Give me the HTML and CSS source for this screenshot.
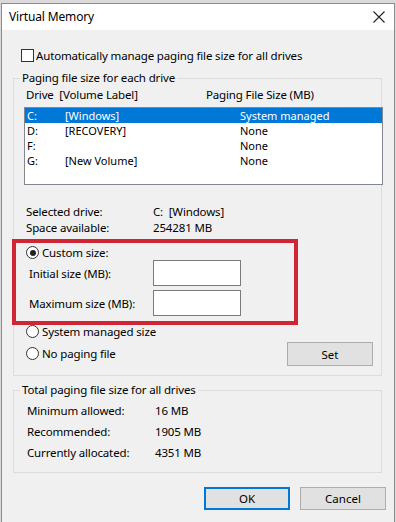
FILE: index.html
```html
<!DOCTYPE html>
<html lang="en">
<head>
    <meta charset="UTF-8">
    <meta name="viewport" content="width=device-width, initial-scale=1.0">
    <title>Virtual Memory</title>
    <link rel="stylesheet" href="styles.css">
</head>
<body>
    <div class="window">
        <div class="titlebar">
            <span class="title">Virtual Memory</span>
            <svg class="close" width="12" height="12" viewBox="0 0 12 12">
                <path d="M0.5 0.5 L11.5 11.5 M11.5 0.5 L0.5 11.5" stroke="#222" stroke-width="1.1" fill="none"/>
            </svg>
        </div>
        <div class="content">
            <div class="check-row">
                <span class="checkbox"></span>
                <span>Automatically manage paging file size for all drives</span>
            </div>

            <div class="group drives">
                <div class="legend">Paging file size for each drive</div>
                <div class="list-head">
                    <span class="head-drive">Drive&nbsp; [Volume Label]</span>
                    <span>Paging File Size (MB)</span>
                </div>
                <div class="listbox">
                    <div class="row selected"><span class="c1">C:</span><span class="c2">[Windows]</span><span>System managed</span></div>
                    <div class="row"><span class="c1">D:</span><span class="c2">[RECOVERY]</span><span>None</span></div>
                    <div class="row"><span class="c1">F:</span><span class="c2"></span><span>None</span></div>
                    <div class="row"><span class="c1">G:</span><span class="c2">[New Volume]</span><span>None</span></div>
                </div>

                <div class="info">
                    <div class="info-row"><span class="info-label">Selected drive:</span><span>C:&nbsp; [Windows]</span></div>
                    <div class="info-row"><span class="info-label">Space available:</span><span>254281 MB</span></div>
                </div>

                <div class="highlight">
                    <div class="radio-row"><span class="radio checked"></span><span>Custom size:</span></div>
                    <div class="size-row"><span class="size-label">Initial size (MB):</span><span class="textbox"></span></div>
                    <div class="size-row"><span class="size-label">Maximum size (MB):</span><span class="textbox"></span></div>
                </div>

                <div class="options">
                    <div class="option-list">
                        <div class="radio-row"><span class="radio"></span><span>System managed size</span></div>
                        <div class="radio-row"><span class="radio"></span><span>No paging file</span></div>
                    </div>
                    <button class="btn set-btn">Set</button>
                </div>
            </div>

            <div class="group totals">
                <div class="legend">Total paging file size for all drives</div>
                <div class="total-row"><span class="total-label">Minimum allowed:</span><span>16 MB</span></div>
                <div class="total-row"><span class="total-label">Recommended:</span><span>1905 MB</span></div>
                <div class="total-row"><span class="total-label">Currently allocated:</span><span>4351 MB</span></div>
            </div>

            <div class="dialog-buttons">
                <button class="btn default">OK</button>
                <button class="btn">Cancel</button>
            </div>
        </div>
    </div>
</body>
</html>
```

FILE: styles.css
```css
body {
    margin: 0;
    padding: 3px 0 0 1px;
    background-color: #dadada;
    font-family: "Noto Sans", sans-serif;
    font-size: 11.5px;
    letter-spacing: -0.15px;
    color: #000;
}
.window {
    width: 394px;
    height: 530px;
    box-sizing: border-box;
    border: 1px solid #8c8c8c;
    background-color: #f0f0f0;
}
.titlebar {
    height: 26px;
    background-color: #fff;
    display: flex;
    align-items: center;
    justify-content: space-between;
    padding: 0 9px 0 7px;
}
.title {
    font-size: 12px;
    margin-top: -2px;
}
.content {
    padding: 19px 12px 0 11px;
}
.check-row {
    display: flex;
    align-items: center;
    height: 13px;
    margin-left: 8px;
    gap: 2px;
}
.checkbox {
    width: 13px;
    height: 13px;
    box-sizing: border-box;
    border: 1px solid #333;
    background-color: #fff;
}
.group {
    border: 1px solid #dcdcdc;
    padding: 0 0 0 10px;
}
.legend {
    width: fit-content;
    height: 16px;
    line-height: 16px;
    margin: -9px 0 0 -4px;
    padding: 0 2px;
    background-color: #f0f0f0;
}
.drives {
    margin-top: 16px;
    padding-bottom: 9px;
}
.list-head {
    display: flex;
    height: 16px;
    line-height: 16px;
    margin: 1px 0 0 2px;
}
.head-drive {
    width: 180px;
}
.listbox {
    width: 359px;
    height: 78px;
    box-sizing: border-box;
    margin-top: 4px;
    border: 1px solid #828790;
    background-color: #fff;
    font-size: 11px;
    letter-spacing: 0;
}
.row {
    display: flex;
    height: 15px;
    line-height: 15px;
    padding-left: 2px;
}
.row.selected {
    background-color: #0078d7;
    color: #fff;
}
.c1 {
    width: 38px;
}
.c2 {
    width: 175px;
}
.info {
    margin-top: 19px;
    margin-left: 2px;
}
.info-row {
    display: flex;
    height: 16px;
    line-height: 16px;
}
.info-label {
    width: 127px;
}
.highlight {
    width: 286px;
    height: 86px;
    box-sizing: border-box;
    margin: 3px 0 0 -12px;
    padding: 2px 0 0 10px;
    border: 4px solid #d02535;
}
.radio-row {
    display: flex;
    align-items: center;
    gap: 3px;
    height: 15px;
    line-height: 15px;
}
.radio {
    position: relative;
    width: 13px;
    height: 13px;
    box-sizing: border-box;
    border: 1px solid #333;
    border-radius: 50%;
    background-color: #fff;
}
.radio.checked::after {
    content: "";
    position: absolute;
    left: 2.5px;
    top: 2.5px;
    width: 6px;
    height: 6px;
    border-radius: 50%;
    background-color: #222;
}
.size-row {
    display: flex;
    align-items: center;
    height: 26px;
    margin-bottom: 4px;
    padding-left: 3px;
}
.size-label {
    width: 124px;
}
.textbox {
    width: 88px;
    height: 26px;
    box-sizing: border-box;
    border: 1px solid #7a7a7a;
    background-color: #fff;
}
.options {
    display: flex;
    justify-content: space-between;
    padding: 0 8px 0 2px;
}
.option-list {
    display: flex;
    flex-direction: column;
    gap: 6px;
    margin-top: -2px;
}
.option-list .radio-row {
    height: 16px;
}
.btn {
    width: 86px;
    height: 23px;
    box-sizing: border-box;
    border: 1px solid #adadad;
    background-color: #e1e1e1;
    font-family: inherit;
    font-size: 11.5px;
    color: #000;
    padding: 0;
}
.set-btn {
    height: 24px;
    margin-top: 17px;
}
.totals {
    margin-top: 14px;
    padding-bottom: 11px;
}
.total-row {
    display: flex;
    height: 16px;
    line-height: 16px;
    margin: 5px 0 0 3px;
}
.totals .legend + .total-row {
    margin-top: 5px;
}
.total-label {
    width: 128px;
}
.dialog-buttons {
    display: flex;
    justify-content: flex-end;
    gap: 10px;
    margin: 14px -4px 0 0;
}
.btn.default {
    border: 2px solid #0078d7;
}
```
